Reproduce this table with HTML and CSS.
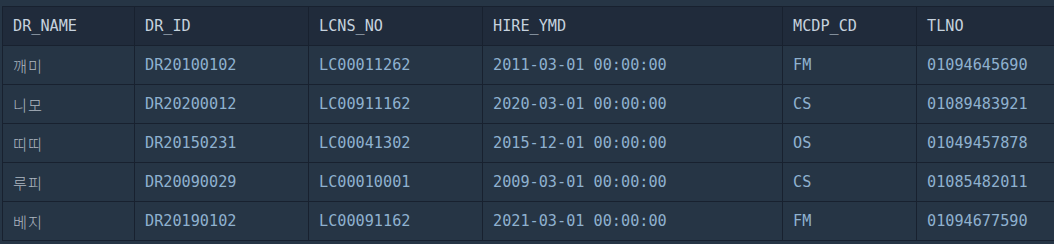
FILE: index.html
```html
<!DOCTYPE html>
<html lang="ko">
<head>
<meta charset="utf-8">
<link rel="stylesheet" href="styles.css">
</head>
<body>
<div class="page">
  <div class="grid">
    <div class="cell head">DR_NAME</div>
    <div class="cell head">DR_ID</div>
    <div class="cell head">LCNS_NO</div>
    <div class="cell head">HIRE_YMD</div>
    <div class="cell head">MCDP_CD</div>
    <div class="cell head">TLNO</div>

    <div class="cell name">깨미</div>
    <div class="cell">DR20100102</div>
    <div class="cell">LC00011262</div>
    <div class="cell">2011-03-01 00:00:00</div>
    <div class="cell">FM</div>
    <div class="cell">01094645690</div>

    <div class="cell name">니모</div>
    <div class="cell">DR20200012</div>
    <div class="cell">LC00911162</div>
    <div class="cell">2020-03-01 00:00:00</div>
    <div class="cell">CS</div>
    <div class="cell">01089483921</div>

    <div class="cell name">띠띠</div>
    <div class="cell">DR20150231</div>
    <div class="cell">LC00041302</div>
    <div class="cell">2015-12-01 00:00:00</div>
    <div class="cell">OS</div>
    <div class="cell">01049457878</div>

    <div class="cell name">루피</div>
    <div class="cell">DR20090029</div>
    <div class="cell">LC00010001</div>
    <div class="cell">2009-03-01 00:00:00</div>
    <div class="cell">CS</div>
    <div class="cell">01085482011</div>

    <div class="cell name">베지</div>
    <div class="cell">DR20190102</div>
    <div class="cell">LC00091162</div>
    <div class="cell">2021-03-01 00:00:00</div>
    <div class="cell">FM</div>
    <div class="cell">01094677590</div>
  </div>
</div>
</body>
</html>
```
FILE: styles.css
```css
html, body {
  margin: 0;
  padding: 0;
  background: #263545;
  overflow: hidden;
}
.page {
  width: 1054px;
  height: 244px;
  padding: 6px 0 0 2px;
  box-sizing: border-box;
  overflow: hidden;
  font-family: "DejaVu Sans Mono", "Noto Sans CJK KR", monospace;
  font-size: 15.2px;
}
.grid {
  display: grid;
  grid-template-columns: 131px 173px 173px 299px 133px 200px;
  grid-auto-rows: 38px;
  gap: 1px;
  padding: 1px;
  background: #18212f;
  width: max-content;
}
.cell {
  background: #263545;
  color: #8fb1cf;
  padding: 0 10px;
  display: flex;
  align-items: center;
  white-space: nowrap;
}
.cell.head {
  background: #202b3b;
  color: #c6d2de;
}
.cell.name {
  color: #aeb7c1;
  font-family: "Noto Sans CJK KR", "DejaVu Sans Mono", sans-serif;
  font-weight: 300;
  letter-spacing: 1px;
}
```
